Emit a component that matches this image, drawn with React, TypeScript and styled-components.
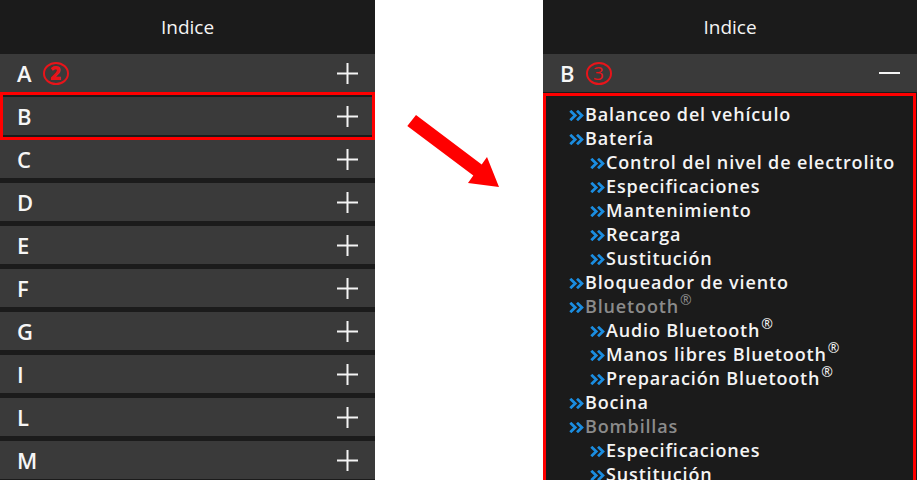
import React from 'react';
import styled, { createGlobalStyle } from 'styled-components';

const GlobalStyle = createGlobalStyle`
  html, body {
    margin: 0;
    padding: 0;
    background: #ffffff;
  }
  body {
    font-family: "Open Sans", "Noto Sans", sans-serif;
  }
`;

const Stage = styled.div`
  display: flex;
  width: 917px;
  height: 480px;
  overflow: hidden;
`;

const Panel = styled.div<{ $width: number }>`
  display: flex;
  flex-direction: column;
  width: ${({ $width }) => $width}px;
  height: 480px;
  flex-shrink: 0;
  background: #1b1b1b;
  overflow: hidden;
`;

const Header = styled.div`
  display: flex;
  align-items: center;
  justify-content: center;
  height: 54px;
  flex-shrink: 0;
  color: #f4f4f4;
  font-size: 19px;
  font-weight: 500;
`;

const RowList = styled.div`
  display: flex;
  flex-direction: column;
  gap: 5px;
`;

const Row = styled.div`
  display: flex;
  align-items: center;
  height: 38px;
  flex-shrink: 0;
  padding: 0 17px 0 17px;
  background: #3a3a3a;
  color: #f6f6f6;
`;

const Letter = styled.span`
  font-size: 22px;
  font-weight: 600;
  line-height: 1;
`;

const Step = styled.span<{ $bold?: boolean }>`
  display: inline-flex;
  align-items: center;
  justify-content: center;
  box-sizing: border-box;
  width: 26px;
  height: 23px;
  margin-left: 11px;
  border: 2px solid #e8141a;
  border-radius: 50%;
  color: #e8141a;
  font-size: 19px;
  font-weight: ${({ $bold }) => ($bold ? 800 : 400)};
  line-height: 1;
`;

const Spacer = styled.div`
  flex: 1;
`;

const Highlight = styled.div`
  margin: -5px 0;
  padding: 2px 0;
  border: 3px solid #f00;
  background: #1b1b1b;
`;

const HighlightRow = styled(Row)`
  padding-left: 14px;
  padding-right: 14px;
`;

const Gutter = styled.div`
  width: 168px;
  height: 480px;
  flex-shrink: 0;
`;

const OpenBox = styled.div`
  flex: 1;
  margin: 1px 1px 0 0;
  padding: 6px 0 0 0;
  border: 3px solid #f00;
  border-bottom: none;
  background: #1b1b1b;
  overflow: hidden;
`;

const Item = styled.div<{ $level: number; $muted?: boolean }>`
  display: flex;
  align-items: baseline;
  height: 24px;
  padding-left: ${({ $level }) => ($level === 1 ? 23 : 44)}px;
  color: ${({ $muted }) => ($muted ? '#8b8b8b' : '#f4f4f4')};
  font-size: 18px;
  font-weight: 600;
  letter-spacing: 0.85px;
  line-height: 24px;
  white-space: nowrap;
`;

const Chevron = styled.svg`
  width: 15px;
  height: 11px;
  margin-right: 1px;
  flex-shrink: 0;
`;

const Reg = styled.sup`
  font-size: 14px;
  font-weight: 400;
  letter-spacing: 0;
  line-height: 0;
  vertical-align: 8px;
  margin-left: 1px;
`;

const PlusIcon = () => (
  <svg width="21" height="21" viewBox="0 0 21 21">
    <path d="M10.5 0 V21 M0 10.5 H21" stroke="#f4f4f4" strokeWidth="2" />
  </svg>
);

const MinusIcon = () => (
  <svg width="21" height="21" viewBox="0 0 21 21">
    <path d="M0 10 H21" stroke="#f4f4f4" strokeWidth="2" />
  </svg>
);

const Arrow = () => (
  <svg width="168" height="480" viewBox="0 0 168 480">
    <polygon
      points="41,115 106.7,164.4 112,157 124,187 93,183 98.3,175.6 32.3,126.1"
      fill="#ff0000"
    />
  </svg>
);

const letters = ['A', 'B', 'C', 'D', 'E', 'F', 'G', 'I', 'L', 'M'];

type Entry = { text: string; level: number; muted?: boolean; reg?: boolean };

const entries: Entry[] = [
  { text: 'Balanceo del vehículo', level: 1 },
  { text: 'Batería', level: 1 },
  { text: 'Control del nivel de electrolito', level: 2 },
  { text: 'Especificaciones', level: 2 },
  { text: 'Mantenimiento', level: 2 },
  { text: 'Recarga', level: 2 },
  { text: 'Sustitución', level: 2 },
  { text: 'Bloqueador de viento', level: 1 },
  { text: 'Bluetooth', level: 1, muted: true, reg: true },
  { text: 'Audio Bluetooth', level: 2, reg: true },
  { text: 'Manos libres Bluetooth', level: 2, reg: true },
  { text: 'Preparación Bluetooth', level: 2, reg: true },
  { text: 'Bocina', level: 1 },
  { text: 'Bombillas', level: 1, muted: true },
  { text: 'Especificaciones', level: 2 },
  { text: 'Sustitución', level: 2 },
];

const BlueChevron = () => (
  <Chevron viewBox="0 0 15 11">
    <path
      d="M1.3 0.8 L6.2 5.5 L1.3 10.2 M8 0.8 L12.9 5.5 L8 10.2"
      fill="none"
      stroke="#1b8de0"
      strokeWidth="2.8"
    />
  </Chevron>
);

export default function App() {
  return (
    <>
      <GlobalStyle />
      <Stage>
        <Panel $width={375}>
          <Header>Indice</Header>
          <RowList>
            {letters.map((l) =>
              l === 'B' ? (
                <Highlight key={l}>
                  <HighlightRow>
                    <Letter>{l}</Letter>
                    <Spacer />
                    <PlusIcon />
                  </HighlightRow>
                </Highlight>
              ) : (
                <Row key={l}>
                  <Letter>{l}</Letter>
                  {l === 'A' && <Step $bold>2</Step>}
                  <Spacer />
                  <PlusIcon />
                </Row>
              )
            )}
          </RowList>
        </Panel>
        <Gutter>
          <Arrow />
        </Gutter>
        <Panel $width={374}>
          <Header>Indice</Header>
          <Row>
            <Letter>B</Letter>
            <Step>3</Step>
            <Spacer />
            <MinusIcon />
          </Row>
          <OpenBox>
            {entries.map((e, i) => (
              <Item key={i} $level={e.level} $muted={e.muted}>
                <BlueChevron />
                <span>
                  {e.text}
                  {e.reg && <Reg>®</Reg>}
                </span>
              </Item>
            ))}
          </OpenBox>
        </Panel>
      </Stage>
    </>
  );
}
